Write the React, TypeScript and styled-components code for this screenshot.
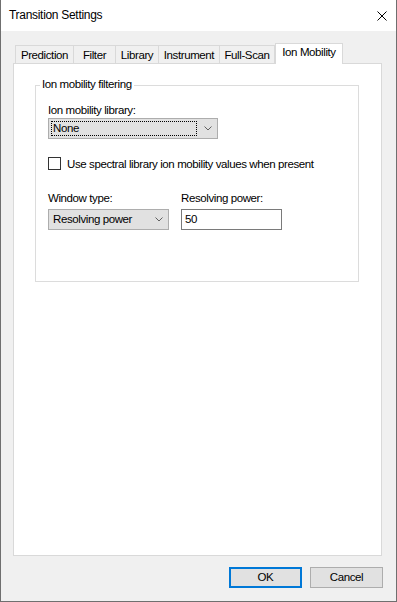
import React from 'react';
import styled, { createGlobalStyle } from 'styled-components';

const GlobalStyle = createGlobalStyle`
  html, body { margin: 0; padding: 0; background: #ffffff; }
  * { box-sizing: border-box; }
`;

const Window = styled.div`
  width: 397px;
  height: 602px;
  display: flex;
  flex-direction: column;
  border: 1px solid #6f6f6f;
  border-top: none;
  background: #f0f0f0;
  font-family: "Liberation Sans", Arial, sans-serif;
  font-size: 11.5px;
  letter-spacing: -0.4px;
  color: #000;
`;

const TitleBar = styled.div`
  height: 31px;
  flex: none;
  background: #ffffff;
  display: flex;
  align-items: center;
  justify-content: space-between;
  padding: 0 9px 0 8px;
`;

const Title = styled.span`
  font-size: 12px;
  letter-spacing: -0.3px;
  line-height: 15px;
`;

const CloseIcon = styled.svg`
  width: 10px;
  height: 10px;
  display: block;
`;

const Body = styled.div`
  flex: 1;
  display: flex;
  flex-direction: column;
  padding: 12px 14px 13px 12px;
`;

const TabStrip = styled.div`
  height: 20px;
  flex: none;
  display: flex;
  align-items: flex-end;
  padding-left: 2px;
  position: relative;
  z-index: 1;
`;

const Tab = styled.div<{ $w: number; $active?: boolean; $first?: boolean }>`
  width: ${(p) => p.$w}px;
  height: ${(p) => (p.$active ? 21 : 18)}px;
  margin-bottom: ${(p) => (p.$active ? -1 : 0)}px;
  margin-left: ${(p) => (p.$first || p.$active ? 0 : -1)}px;
  border: 1px solid #d9d9d9;
  border-bottom: none;
  background: ${(p) => (p.$active ? '#ffffff' : '#f0f0f0')};
  display: flex;
  justify-content: center;
  align-items: flex-start;
  padding-top: ${(p) => (p.$active ? 1 : 2)}px;
  line-height: 14px;
  white-space: nowrap;
`;

const Panel = styled.div`
  flex: 1;
  background: #ffffff;
  border: 1px solid #d9d9d9;
  padding: 21px 0 0 21px;
`;

const GroupBox = styled.div`
  width: 324px;
  height: 197px;
  border: 1px solid #dcdcdc;
  padding: 0 12px;
  display: flex;
  flex-direction: column;
`;

const Legend = styled.span`
  align-self: flex-start;
  margin: -9px 0 0 -8px;
  padding: 0 2px;
  background: #ffffff;
  line-height: 15px;
`;

const FieldLabel = styled.div<{ $top?: number }>`
  line-height: 15px;
  margin-top: ${(p) => p.$top ?? 0}px;
`;

const Combo = styled.div<{ $w: number }>`
  width: ${(p) => p.$w}px;
  height: 21px;
  background: #e1e1e1;
  border: 1px solid #adadad;
  display: flex;
  align-items: center;
  position: relative;
  padding: 0 0 0 2px;
`;

const ComboText = styled.div<{ $focus?: boolean }>`
  flex: 1;
  height: 15px;
  line-height: 13px;
  padding-left: 1px;
  border: 1px dotted ${(p) => (p.$focus ? '#000' : 'transparent')};
  margin-right: 20px;
`;

const Chevron = styled.svg`
  position: absolute;
  right: 5px;
  top: 7px;
  width: 8px;
  height: 5px;
`;

const CheckRow = styled.div`
  display: flex;
  align-items: center;
  margin-top: 17px;
  height: 15px;
`;

const CheckBox = styled.div`
  width: 13px;
  height: 13px;
  border: 1px solid #333333;
  background: #ffffff;
  margin-right: 6px;
`;

const FieldRow = styled.div`
  display: flex;
  gap: 12px;
  margin-top: 20px;
`;

const Field = styled.div<{ $w: number }>`
  width: ${(p) => p.$w}px;
  display: flex;
  flex-direction: column;
  gap: 3px;
`;

const TextBox = styled.div<{ $w: number }>`
  width: ${(p) => p.$w}px;
  height: 21px;
  border: 1px solid #7a7a7a;
  background: #fff;
  padding-left: 3px;
  line-height: 18px;
`;

const Footer = styled.div`
  display: flex;
  justify-content: flex-end;
  gap: 8px;
  margin-top: 11px;
  margin-right: -1px;
  flex: none;
`;

const Button = styled.div<{ $default?: boolean }>`
  width: 73px;
  height: 21px;
  background: #e1e1e1;
  border: ${(p) => (p.$default ? '2px solid #0078d7' : '1px solid #adadad')};
  display: flex;
  align-items: center;
  justify-content: center;
  line-height: 15px;
`;

const ChevronIcon = () => (
  <Chevron viewBox="0 0 8 5">
    <path d="M0.5 0.5 L4 4 L7.5 0.5" fill="none" stroke="#606060" strokeWidth="1" />
  </Chevron>
);

const tabs = [
  { label: 'Prediction', w: 59 },
  { label: 'Filter', w: 43 },
  { label: 'Library', w: 44 },
  { label: 'Instrument', w: 62 },
  { label: 'Full-Scan', w: 56 },
];

export default function App() {
  return (
    <>
      <GlobalStyle />
      <Window>
        <TitleBar>
          <Title>Transition Settings</Title>
          <CloseIcon viewBox="0 0 10 10">
            <path d="M0.5 0.5 L9.5 9.5 M9.5 0.5 L0.5 9.5" stroke="#000" strokeWidth="1" fill="none" />
          </CloseIcon>
        </TitleBar>
        <Body>
          <TabStrip>
            {tabs.map((t, i) => (
              <Tab key={t.label} $w={t.w} $first={i === 0}>
                {t.label}
              </Tab>
            ))}
            <Tab $w={68} $active>
              Ion Mobility
            </Tab>
          </TabStrip>
          <Panel>
            <GroupBox>
              <Legend>Ion mobility filtering</Legend>
              <FieldLabel $top={11}>Ion mobility library:</FieldLabel>
              <Combo $w={170}>
                <ComboText $focus>None</ComboText>
                <ChevronIcon />
              </Combo>
              <CheckRow>
                <CheckBox />
                <span>Use spectral library ion mobility values when present</span>
              </CheckRow>
              <FieldRow>
                <Field $w={121}>
                  <FieldLabel>Window type:</FieldLabel>
                  <Combo $w={121}>
                    <ComboText>Resolving power</ComboText>
                    <ChevronIcon />
                  </Combo>
                </Field>
                <Field $w={101}>
                  <FieldLabel>Resolving power:</FieldLabel>
                  <TextBox $w={101}>50</TextBox>
                </Field>
              </FieldRow>
            </GroupBox>
          </Panel>
          <Footer>
            <Button $default>OK</Button>
            <Button>Cancel</Button>
          </Footer>
        </Body>
      </Window>
    </>
  );
}
